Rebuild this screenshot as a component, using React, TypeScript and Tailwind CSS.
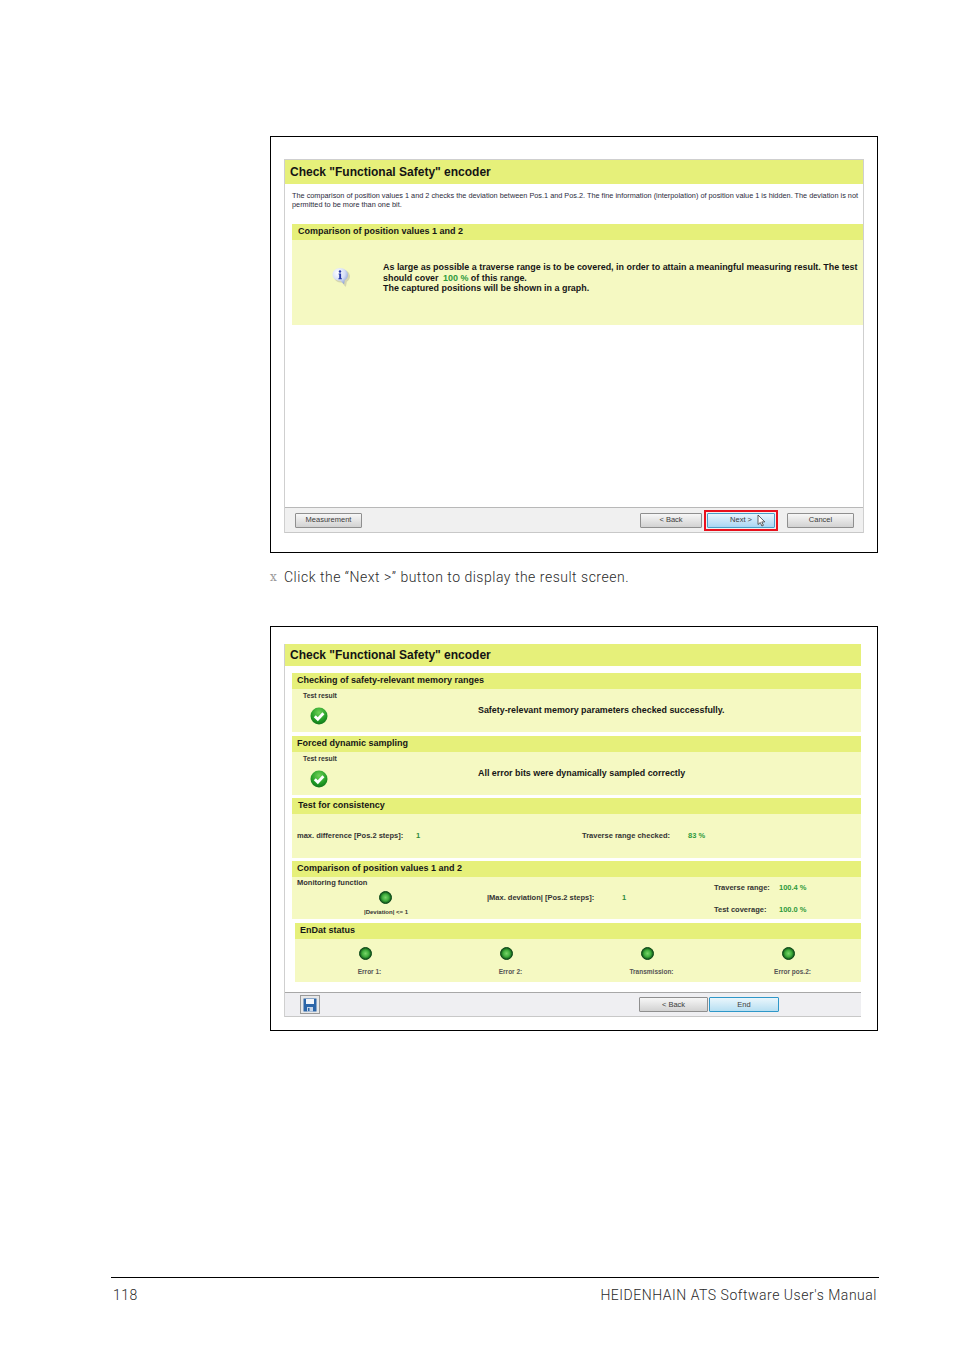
import type { ReactNode } from "react"

const ui = "font-['Liberation_Sans',Arial,sans-serif]"

function InfoIcon() {
  return (
    <svg width="20" height="20" viewBox="0 0 20 20">
      <defs>
        <radialGradient id="bubble" cx="35%" cy="30%" r="75%">
          <stop offset="0%" stopColor="#ffffff" />
          <stop offset="60%" stopColor="#d5def5" />
          <stop offset="100%" stopColor="#8fa3d8" />
        </radialGradient>
      </defs>
      <path d="M10 1.5c4.4 0 8 3 8 6.8 0 2.6-1.5 4.3-3.2 5.4l-.8 4.6c-.1.5-.5.5-.8.2l-3-3.8C5.300 14.700 2 12.100 2 8.300 2 4.500 5.600 1.500 10 1.500z" fill="#b9b9a0" opacity="0.55" transform="translate(1 1)" />
      <path d="M9 1c4.400 0 8 3 8 6.800 0 2.600-1.500 4.300-3.200 5.400l-.8 4.100-3.400-3.500C5 13.800 1.500 11.600 1.500 7.800 1.500 4 4.600 1 9 1z" fill="url(#bubble)" />
      <circle cx="9" cy="4.500" r="1.200" fill="#2436a8" />
      <path d="M7.600 6.500h2.500v4.800h.8v1H7.400v-1h.8V7.500h-.6z" fill="#2436a8" />
    </svg>
  )
}

function CheckIcon() {
  return (
    <svg width="18" height="18" viewBox="0 0 18 18">
      <defs>
        <radialGradient id="okGreen" cx="50%" cy="30%" r="75%">
          <stop offset="0%" stopColor="#6fd257" />
          <stop offset="65%" stopColor="#1f9a24" />
          <stop offset="100%" stopColor="#0f6d18" />
        </radialGradient>
      </defs>
      <circle cx="9" cy="9" r="8.500" fill="url(#okGreen)" />
      <path d="M4.800 9.200l3 3 5.600-6" fill="none" stroke="#ffffff" strokeWidth="2.800" />
    </svg>
  )
}

function Led() {
  return (
    <svg width="13" height="13" viewBox="0 0 13 13">
      <defs>
        <radialGradient id="led" cx="50%" cy="50%" r="50%">
          <stop offset="0%" stopColor="#7ad46a" />
          <stop offset="55%" stopColor="#3fae3c" />
          <stop offset="100%" stopColor="#0c4d16" />
        </radialGradient>
      </defs>
      <circle cx="6.500" cy="6.500" r="6" fill="url(#led)" stroke="#0f4a1a" strokeWidth="1" />
    </svg>
  )
}

function Floppy() {
  return (
    <svg width="14" height="14" viewBox="0 0 14 14">
      <path d="M0.500 0.500h13v13h-13z" fill="#2b65a8" />
      <path d="M3 1h8v5H3z" fill="#f2f5fa" />
      <path d="M4 9h6v4.500H4z" fill="#c7d5e8" />
      <path d="M5 10h1.500v3H5z" fill="#2b65a8" />
    </svg>
  )
}

function Cursor() {
  return (
    <svg width="9" height="13" viewBox="0 0 9 13" className="ml-[5px]">
      <path d="M1 1v9.500l2.300-2 1.600 3.500 1.500-.7-1.600-3.400h3z" fill="#ffffff" stroke="#3a3a3a" strokeWidth="0.800" />
    </svg>
  )
}

function Btn({ children, w, active, bright }: { children: ReactNode; w: string; active?: boolean; bright?: boolean }) {
  const skin = active
    ? "border-[#4a9fc8] bg-gradient-to-b from-[#e8f5fd] to-[#a9d6f3]"
    : bright
      ? "border-[#2f97c8] bg-gradient-to-b from-[#eaf6fc] to-[#b7dff2]"
      : "border-[#8f8f8f] bg-gradient-to-b from-[#f7f7f7] to-[#d2d2d2]"
  return (
    <div className={`${w} h-[15px] flex items-center justify-center rounded-[1px] border text-[7.500px] text-[#3c3c3c] ${skin}`}>
      {children}
    </div>
  )
}

function Head({ children, className = "" }: { children: ReactNode; className?: string }) {
  return (
    <div className={`h-[16px] flex items-center bg-[#e6f07a] text-[9px] font-bold text-[#161616] ${className}`}>
      {children}
    </div>
  )
}

function Result({ message }: { message: string }) {
  return (
    <div className="flex h-[43px] bg-[#f5f9c2]">
      <div className="w-[63px] pl-[11px] pt-[3px]">
        <div className="text-[6.800px] leading-[7px] font-bold text-[#333] whitespace-nowrap">Test result</div>
        <div className="ml-[7px] mt-[8px]"><CheckIcon /></div>
      </div>
      <div className="ml-[123px] pt-[15px] text-[8.900px] leading-[12px] font-bold text-[#161616] whitespace-nowrap">{message}</div>
    </div>
  )
}

function Status({ label }: { label: string }) {
  return (
    <div className="flex w-[141px] flex-col items-center">
      <Led />
      <div className="ml-[8px] mt-[8px] text-[6.500px] leading-[8px] font-bold text-[#555] whitespace-nowrap">{label}</div>
    </div>
  )
}

function FirstScreen() {
  return (
    <div className="h-[417px] w-[608px] border border-black pl-[13px] pt-[22px]">
      <div className={`${ui} flex h-[374px] w-[580px] flex-col border border-[#cfcfcf]`}>
        <div className="flex h-[24px] items-center bg-[#e6f07a] pl-[5px] text-[12px] font-bold text-[#141414] whitespace-nowrap">
          Check "Functional Safety" encoder
        </div>
        <div className="ml-[7px] mt-[7px] h-[33px] text-[7.320px] leading-[9px] text-[#2b2b3c] whitespace-nowrap">
          The comparison of position values 1 and 2 checks the deviation between Pos.1 and Pos.2. The fine information (interpolation) of position value 1 is hidden. The deviation is not
          <br />
          permitted to be more than one bit.
        </div>
        <Head className="ml-[7px] pl-[6px]">Comparison of position values 1 and 2</Head>
        <div className="ml-[7px] flex h-[85px] bg-[#f5f9c2]">
          <div className="ml-[39px] mt-[27px]"><InfoIcon /></div>
          <div className="ml-[32px] mt-[22px] text-[8.940px] leading-[10.500px] font-bold text-[#161616] whitespace-nowrap">
            As large as possible a traverse range is to be covered, in order to attain a meaningful measuring result. The test
            <br />
            should cover <span className="ml-[2px] text-[#2f9a3c]">100 %</span> of this range.
            <br />
            The captured positions will be shown in a graph.
          </div>
        </div>
        <div className="flex-1" />
        <div className="flex h-[25px] items-center border-t border-[#b8b8b8] bg-[#f0f0f0] pl-[10px] pr-[9px] shadow-[0_1px_0_#c8c8c8]">
          <Btn w="w-[67px]">Measurement</Btn>
          <div className="ml-auto"><Btn w="w-[62px]">&lt; Back</Btn></div>
          <div className="ml-[2px] border-2 border-[#e8101c] p-px">
            <Btn w="w-[68px]" active>
              <span className="ml-[14px]">Next &gt;</span>
              <Cursor />
            </Btn>
          </div>
          <div className="ml-[9px]"><Btn w="w-[67px]">Cancel</Btn></div>
        </div>
      </div>
    </div>
  )
}

function SecondScreen() {
  return (
    <div className="mt-[40px] h-[405px] w-[608px] border border-black pl-[13px] pt-[17px]">
      <div className={`${ui} flex h-[373px] w-[577px] flex-col border-l border-[#cfcfcf]`}>
        <div className="flex h-[22px] items-center bg-[#e6f07a] pl-[5px] text-[12px] font-bold text-[#141414] whitespace-nowrap">
          Check "Functional Safety" encoder
        </div>
        <div className="ml-[7px] mt-[7px] flex flex-col">
          <Head className="pl-[5px]">Checking of safety-relevant memory ranges</Head>
          <Result message="Safety-relevant memory parameters checked successfully." />
          <Head className="mt-[4px] pl-[5px]">Forced dynamic sampling</Head>
          <Result message="All error bits were dynamically sampled correctly" />
          <Head className="mt-[3px] pl-[6px]">Test for consistency</Head>
          <div className="flex h-[44px] bg-[#f5f9c2] pl-[5px] pt-[17px] text-[7.500px] leading-[10px] font-bold text-[#333] whitespace-nowrap">
            <span className="w-[119px]">max. difference [Pos.2 steps]:</span>
            <span className="w-[166px] text-[#2f8a3c]">1</span>
            <span className="w-[106px]">Traverse range checked:</span>
            <span className="text-[#2f9a3c]">83 %</span>
          </div>
          <Head className="mt-[3px] pl-[5px]">Comparison of position values 1 and 2</Head>
          <div className="flex h-[42px] bg-[#f5f9c2] text-[7.500px] leading-[10px] font-bold text-[#333] whitespace-nowrap">
            <div className="w-[195px] pl-[5px] pt-[1px]">
              <div>Monitoring function</div>
              <div className="ml-[82px] mt-[3px] w-[13px]"><Led /></div>
              <div className="ml-[67px] mt-[4px] text-[6px] leading-[8px]">|Deviation| &lt;= 1</div>
            </div>
            <div className="flex w-[227px] items-center">
              <span className="w-[135px]">|Max. deviation| [Pos.2 steps]:</span>
              <span className="text-[#2f8a3c]">1</span>
            </div>
            <div className="flex flex-col pt-[6px]">
              <div className="flex">
                <span className="w-[65px]">Traverse range:</span>
                <span className="text-[#2f9a3c]">100.4 %</span>
              </div>
              <div className="mt-[12px] flex">
                <span className="w-[65px]">Test coverage:</span>
                <span className="text-[#2f9a3c]">100.0 %</span>
              </div>
            </div>
          </div>
          <Head className="ml-[3px] mt-[4px] pl-[5px]">EnDat status</Head>
          <div className="ml-[3px] flex h-[43px] bg-[#f5f9c2] pt-[8px]">
            <Status label="Error 1:" />
            <Status label="Error 2:" />
            <Status label="Transmission:" />
            <Status label="Error pos.2:" />
          </div>
        </div>
        <div className="flex-1" />
        <div className="flex h-[25px] items-center border-y border-t-[#a8a8a8] border-b-[#c8c8c8] bg-[#efeff2] pl-[15px] pr-[82px]">
          <div className="flex h-[19px] w-[20px] items-center justify-center border border-[#9a9a9a] bg-[#e8e8e8]">
            <Floppy />
          </div>
          <div className="ml-auto"><Btn w="w-[69px]">&lt; Back</Btn></div>
          <div className="ml-[1px]"><Btn w="w-[70px]" bright>End</Btn></div>
        </div>
      </div>
    </div>
  )
}

export default function App() {
  return (
    <div className="h-[1350px] w-[954px] bg-white pt-[136px] font-['Roboto',sans-serif] font-light text-[#2a2a2a]">
      <div className="pl-[270px]">
        <FirstScreen />
        <div className="mt-[15px] flex h-[18px] items-center text-[14px]">
          <span className="w-[14px] font-['DejaVu_Serif',serif] text-[12px] text-[#999]">x</span>
          <span className="tracking-[0.51px] whitespace-nowrap">Click the “Next &gt;” button to display the result screen.</span>
        </div>
        <SecondScreen />
      </div>
      <div className="ml-[111px] mt-[246px] w-[768px] border-t border-black">
        <div className="mt-[8px] flex justify-between px-[2px] text-[14px] leading-[18px] tracking-[0.52px]">
          <span>118</span>
          <span>HEIDENHAIN ATS Software User's Manual</span>
        </div>
      </div>
    </div>
  )
}
